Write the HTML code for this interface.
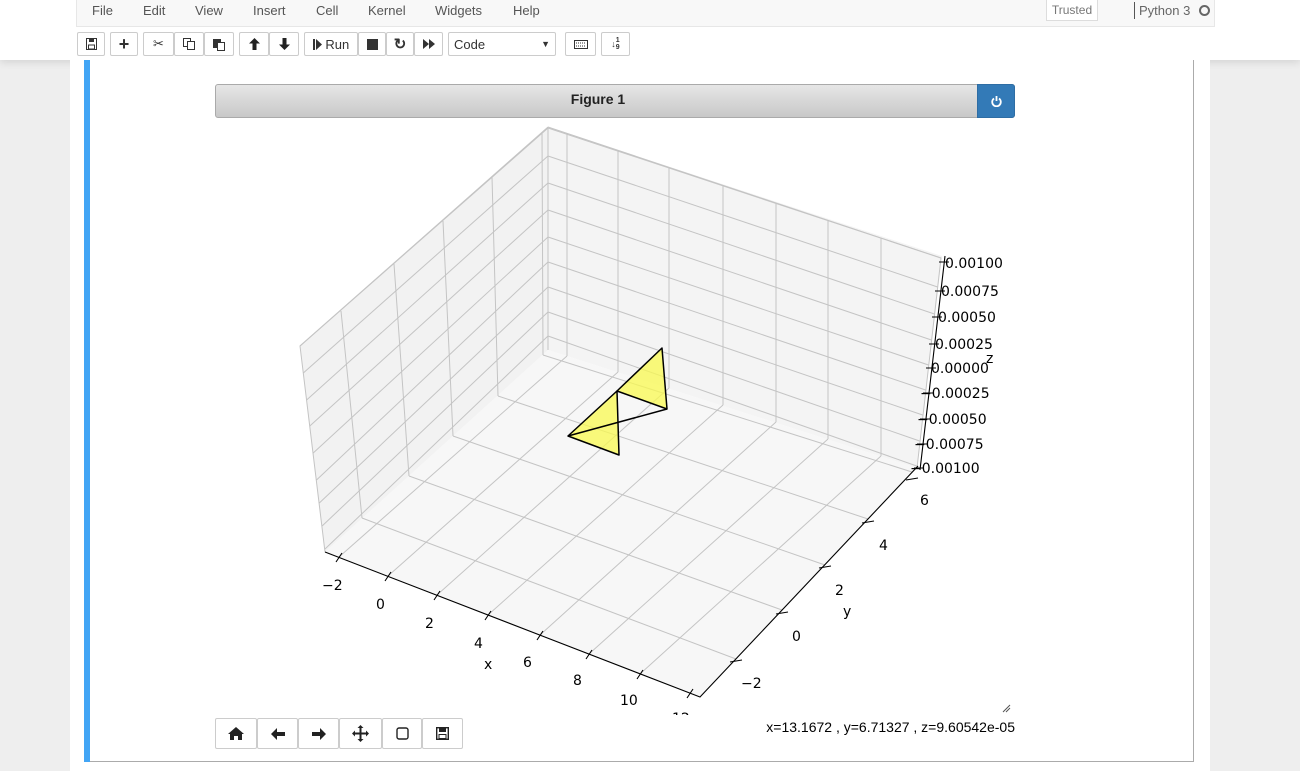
<!DOCTYPE html>
<html><head><meta charset="utf-8"><style>
*{box-sizing:border-box}
body{margin:0;width:1300px;height:771px;overflow:hidden;background:#eee;font-family:"Liberation Sans",sans-serif;position:relative}
.hdr{position:absolute;left:0;top:0;width:1300px;height:60px;background:#fff;box-shadow:0 2px 8px rgba(0,0,0,.12)}
.menu{position:absolute;left:76px;top:-1px;width:1139px;height:28px;background:#f8f8f8;border:1px solid #e7e7e7;border-top:none}
.menu span{position:absolute;top:4px;font-size:13px;color:#555}
.btn{position:absolute;top:32px;height:24px;border:1px solid #ccc;background:#fff;border-radius:2px;font-size:13px;color:#333;display:flex;align-items:center;justify-content:center}
.nb{position:absolute;left:70px;top:60px;width:1140px;height:711px;background:#fff}
.cell{position:absolute;left:84px;top:60px;width:1110px;height:702px;border:1px solid #ababab;border-top:none}
.bar{position:absolute;left:84px;top:60px;width:6px;height:702px;background:#42a5f5}
.tb{position:absolute;top:718px;height:31px;border:1px solid #ccc;background:#fff;border-radius:2px;display:flex;align-items:center;justify-content:center}
</style></head><body>
<div class="hdr"></div>
<div class="menu">
<span style="left:15px">File</span><span style="left:66px">Edit</span><span style="left:118px">View</span><span style="left:176px">Insert</span><span style="left:239px">Cell</span><span style="left:291px">Kernel</span><span style="left:358px">Widgets</span><span style="left:436px">Help</span>
<div style="position:absolute;left:969px;top:0;width:52px;height:22px;border:1px solid #ddd;background:#fff;font-size:12px;color:#777;text-align:center;line-height:20px">Trusted</div>
<div style="position:absolute;left:1057px;top:3px;width:1px;height:17px;background:#555"></div>
<span style="left:1062px;color:#666">Python 3</span>
<div style="position:absolute;left:1122px;top:6px;width:11px;height:11px;border:2px solid #666;border-radius:50%"></div>
</div>
<div class="btn" style="left:77px;width:28px"><svg width="11" height="12"><rect x="0.5" y="0.5" width="10" height="11" fill="none" stroke="#333"/><rect x="3" y="1" width="5" height="3" fill="#333"/><rect x="2.5" y="7" width="6" height="4" fill="none" stroke="#333"/></svg></div>
<div class="btn" style="left:110px;width:28px;font-size:18px;font-weight:bold">+</div>
<div class="btn" style="left:143px;width:31px;font-size:13px">✂</div>
<div class="btn" style="left:174px;width:30px"><svg width="12" height="12"><rect x="0.5" y="0.5" width="7" height="8" fill="none" stroke="#333"/><rect x="4.5" y="3.5" width="7" height="8" fill="#fff" stroke="#333"/></svg></div>
<div class="btn" style="left:204px;width:30px"><svg width="12" height="13"><rect x="0" y="1" width="8" height="9" fill="#333"/><rect x="4.5" y="4.5" width="7" height="8" fill="#fff" stroke="#333"/></svg></div>
<div class="btn" style="left:239px;width:30px"><svg width="11" height="12"><path d="M5.5 0L11 5.5H7.5V12h-4V5.5H0z" fill="#222"/></svg></div>
<div class="btn" style="left:269px;width:30px"><svg width="11" height="12"><path d="M5.5 12L11 6.5H7.5V0h-4v6.5H0z" fill="#222"/></svg></div>
<div class="btn" style="left:304px;width:54px"><svg width="9" height="11"><path d="M0 0h2v11H0zM3 0l6 5.5L3 11z" fill="#333"/></svg>&nbsp;Run</div>
<div class="btn" style="left:358px;width:28px"><div style="width:11px;height:11px;background:#333"></div></div>
<div class="btn" style="left:386px;width:28px;font-size:15px;font-weight:bold">↻</div>
<div class="btn" style="left:414px;width:29px"><svg width="12" height="10"><path d="M0 0l6 5-6 5zM6 0l6 5-6 5z" fill="#333"/></svg></div>
<div class="btn" style="left:448px;width:108px;justify-content:space-between;padding:0 5px;font-size:13px"><span>Code</span><span style="font-size:9px">▼</span></div>
<div class="btn" style="left:565px;width:31px"><svg width="14" height="9"><rect x="0.5" y="0.5" width="13" height="8" fill="none" stroke="#333"/><path d="M2 3h10M2 6h10" stroke="#333" stroke-dasharray="1 1"/></svg></div>
<div class="btn" style="left:601px;width:29px;font-size:9px;font-weight:bold">↓<span style="font-size:7px;line-height:7px">1<br>9</span></div>

<div class="nb"></div>
<div class="cell"></div>
<div class="bar"></div>

<div style="position:absolute;left:215px;top:84px;width:800px;height:34px;border:1px solid #aaa;border-radius:3px;background:linear-gradient(#e6e6e6,#c8c8c8);font-size:14px;font-weight:bold;color:#222;text-align:center;line-height:28px;padding-right:34px">Figure 1</div>
<div style="position:absolute;left:977px;top:84px;width:38px;height:34px;background:#337ab7;border:1px solid #2e6da4;border-radius:0 3px 3px 0;display:flex;align-items:center;justify-content:center"><svg width="11" height="11"><path d="M3 2.5A4.3 4.3 0 1 0 8 2.5" fill="none" stroke="#fff" stroke-width="1.8"/><path d="M5.5 0v5" stroke="#fff" stroke-width="1.8"/></svg></div>

<svg style="position:absolute;left:0;top:0" width="1300" height="771" font-family="DejaVu Sans, sans-serif" font-size="14">
<polygon points="300,346 548,127 548,350 325,552" fill="#f2f2f2"/>
<polygon points="548,127 942,256 917,468 548,350" fill="#f4f4f4"/>
<polygon points="325,552 548,350 917,468 700,697" fill="#f7f7f7"/>
<g stroke="#c4c4c4" stroke-width="1" fill="none">
<path d="M548,127L300,346L325,552M548,127L941,258L917,468M548,127V350"/>
<path d="M548,128L941,258M548,156L937.6,287M548,183L934.4,314M548,210L931.4,340M548,237L928.5,365M548,262L925.6,390M548,287L922.6,415M548,312L919.6,441M548,336L916.7,466"/>
<path d="M548,128L300,346M548,156L303.3,373M548,183L306.6,400M548,210L309.8,426M548,237L313.2,453M548,262L316.5,480M548,287L319.3,503M548,312L322.1,526M548,336L325,549"/>
<path d="M567,356V133M618,372V150M669,388V167M723,405V185M776,422V203M828,439V220M881,456V238"/>
<path d="M362,518L341,311M409,476L394,264M453,436L443,221M498,396L492,177M543,355L542,132"/>
<path d="M339,557L567,356M388,576L618,372M437,595L669,388M488,615L723,405M540,635L776,422M589,654L828,439M640,674L881,456"/>
<path d="M736,659L362,518M782,610L409,476M825,565L453,436M868,519L498,396M912,472L543,355"/>
</g>
<g stroke="#000" stroke-width="1.1" fill="none">
<path d="M325,552L700,697L918,466M945,256L920,470"/>
<path d="M342,553L336,562M391,572L385,581M440,591L434,600M491,611L485,620M543,631L537,640M592,650L586,659M643,670L637,679M693,689L687,698"/>
<path d="M730,662L742,660M776,614L788,612M819,568L831,566M862,523L874,521M906,480L918,478"/>
<path d="M939,262H949M935,291H945M932,317H942M929,344H939M926,368H936M923,393H933M920,419H930M917,444H927M914,468H924"/>
</g>
<g fill="#fafa50" fill-opacity="0.75" stroke="#000" stroke-width="1.5" stroke-linejoin="round">
<polygon points="617,391 662,348 667,409"/>
<polygon points="568,436 617,391 619,455"/>
<path d="M568,436L667,409" fill="none"/>
</g>
<g fill="#000">
<text x="322" y="590">−2</text><text x="376" y="609">0</text><text x="425" y="628">2</text><text x="474" y="648">4</text><text x="523" y="667">6</text><text x="573" y="685">8</text><text x="620" y="705">10</text><text x="672" y="723">12</text>
<text x="484" y="669">x</text>
<text x="741" y="688">−2</text><text x="792" y="641">0</text><text x="835" y="595">2</text><text x="879" y="550">4</text><text x="920" y="505">6</text>
<text x="843" y="616">y</text>
<text x="945" y="268">0.00100</text><text x="941" y="296">0.00075</text><text x="938" y="322">0.00050</text><text x="935" y="349">0.00025</text><text x="931" y="373">0.00000</text>
<text x="920" y="398">−0.00025</text><text x="917" y="424">−0.00050</text><text x="914" y="449">−0.00075</text><text x="910" y="473">−0.00100</text>
<text x="986" y="363">z</text>
</g>
<rect x="215" y="715" width="800" height="45" fill="#fff"/>
<path d="M1003,712L1010,705M1006,712L1010,708" stroke="#555"/>
</svg>

<div class="tb" style="left:215px;width:42px"><svg width="16" height="13"><path d="M8 0L0 7h2v6h4V9h4v4h4V7h2z" fill="#222"/></svg></div>
<div class="tb" style="left:257px;width:41px"><svg width="14" height="12"><path d="M6 0L0 6l6 6V8h8V4H6z" fill="#222"/></svg></div>
<div class="tb" style="left:298px;width:41px"><svg width="14" height="12"><path d="M8 0l6 6-6 6V8H0V4h8z" fill="#222"/></svg></div>
<div class="tb" style="left:339px;width:43px"><svg width="17" height="17"><path d="M8.5 0l3 3h-2v4.5h4.5v-2l3 3-3 3v-2H9.5V14h2l-3 3-3-3h2V9.5H3v2l-3-3 3-3v2h4.5V3h-2z" fill="#222"/></svg></div>
<div class="tb" style="left:382px;width:40px"><svg width="13" height="13"><rect x="1" y="1" width="11" height="11" rx="2" fill="none" stroke="#222" stroke-width="1.4"/></svg></div>
<div class="tb" style="left:422px;width:41px"><svg width="13" height="13"><rect x="0.7" y="0.7" width="11.6" height="11.6" fill="none" stroke="#222" stroke-width="1.4"/><rect x="3" y="1" width="7" height="4" fill="#222"/><rect x="3" y="7.5" width="7" height="4" fill="none" stroke="#222"/></svg></div>
<div style="position:absolute;left:700px;top:719px;width:315px;text-align:right;font-size:14px;color:#000">x=13.1672 , y=6.71327 , z=9.60542e-05</div>
</body></html>
